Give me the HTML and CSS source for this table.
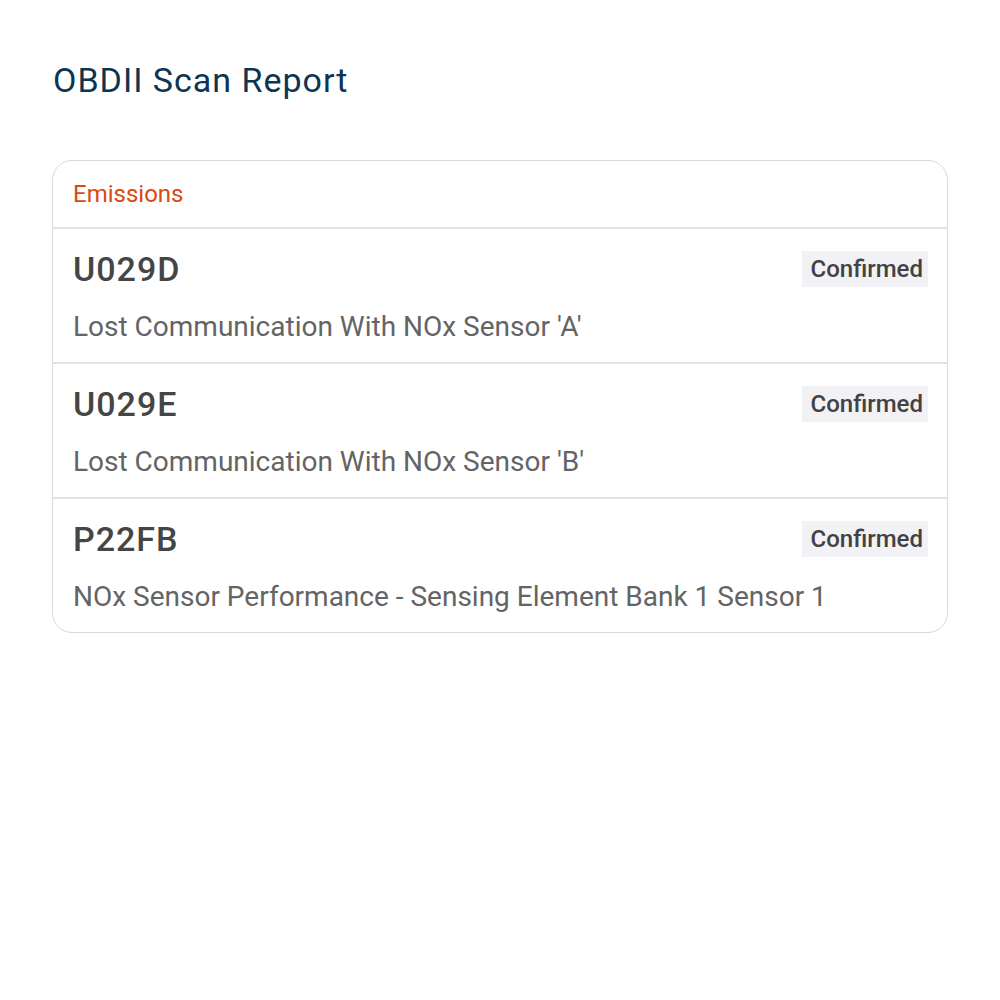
FILE: index.html
```html
<!DOCTYPE html>
<html>
<head>
<meta charset="utf-8">
<link rel="stylesheet" href="styles.css">
</head>
<body>
<main class="page">
  <h1 class="title">OBDII Scan Report</h1>
  <section class="card">
    <div class="card-header">Emissions</div>
    <div class="row">
      <div class="row-top">
        <span class="code">U029D</span>
        <span class="badge">Confirmed</span>
      </div>
      <div class="desc">Lost Communication With NOx Sensor 'A'</div>
    </div>
    <div class="row">
      <div class="row-top">
        <span class="code">U029E</span>
        <span class="badge">Confirmed</span>
      </div>
      <div class="desc">Lost Communication With NOx Sensor 'B'</div>
    </div>
    <div class="row">
      <div class="row-top">
        <span class="code">P22FB</span>
        <span class="badge">Confirmed</span>
      </div>
      <div class="desc">NOx Sensor Performance - Sensing Element Bank 1 Sensor 1</div>
    </div>
  </section>
</main>
</body>
</html>
```

FILE: styles.css
```css
html, body {
  margin: 0;
  padding: 0;
  background: #ffffff;
}
body {
  font-family: Roboto, "Noto Sans", sans-serif;
}
.page {
  padding: 56px 52px 0 52px;
}
.title {
  margin: 0;
  font-size: 34px;
  font-weight: 400;
  letter-spacing: 1px;
  color: #0d3451;
  line-height: 48px;
  padding-left: 1px;
}
.card {
  margin-top: 56px;
  border: 1px solid #d9d9d9;
  border-radius: 20px;
  overflow: hidden;
}
.card-header {
  height: 66px;
  display: flex;
  align-items: center;
  padding: 0 20px;
  font-size: 24px;
  color: #d84a10;
  border-bottom: 2px solid #e2e2e2;
}
.row {
  padding: 22px 19px 0 20px;
  height: 111px;
  border-bottom: 2px solid #e2e2e2;
}
.row:last-child {
  border-bottom: none;
}
.row-top {
  display: flex;
  justify-content: space-between;
  align-items: center;
  height: 36px;
}
.code {
  font-size: 34px;
  font-weight: 500;
  letter-spacing: 1px;
  color: #454545;
}
.badge {
  background: #f2f1f6;
  height: 36px;
  display: flex;
  align-items: center;
  padding: 0 5px 0 9px;
  font-size: 24px;
  font-weight: 500;
  color: #424242;
}
.desc {
  margin-top: 23px;
  font-size: 28px;
  line-height: 33px;
  color: #646464;
}
```
